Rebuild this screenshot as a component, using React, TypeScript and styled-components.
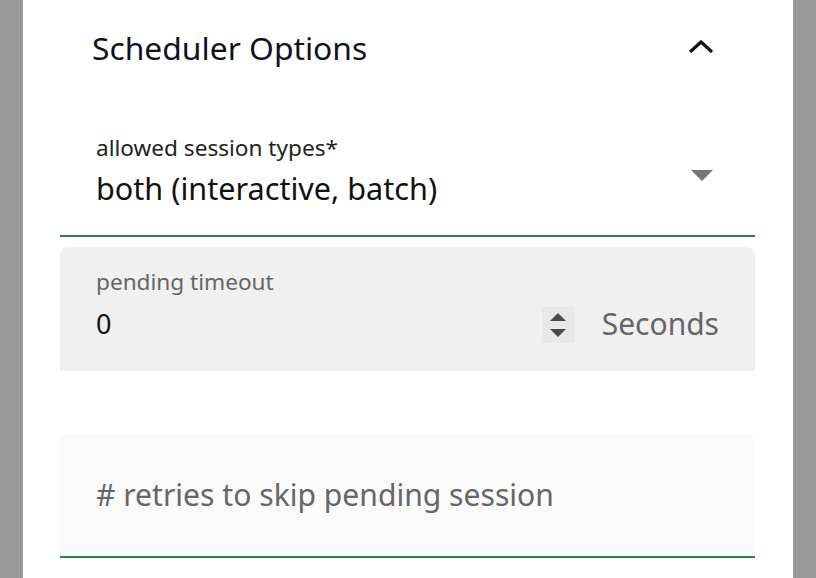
import React from "react";
import styled, { createGlobalStyle } from "styled-components";

const Global = createGlobalStyle`
  html, body { margin: 0; padding: 0; background: #fff; }
  body { font-family: "Noto Sans", "Open Sans", sans-serif; }
`;

const Page = styled.div`
  display: flex;
  height: 578px;
  overflow: hidden;
`;

const SideBar = styled.div`
  width: 23px;
  flex: none;
  background: #999999;
`;

const Panel = styled.div`
  flex: 1;
  background: #fff;
  padding: 0 38px 0 37px;
  display: flex;
  flex-direction: column;
`;

const Header = styled.div`
  height: 94px;
  flex: none;
  display: flex;
  align-items: center;
  justify-content: space-between;
  padding: 0 41px 0 32px;
`;

const Title = styled.div`
  font-size: 31.8px;
  color: #111122;
`;

const IconBox = styled.div`
  width: 26px;
  height: 28px;
  display: flex;
  align-items: center;
  justify-content: center;
`;

const SelectField = styled.div`
  position: relative;
  flex: none;
  height: 143px;
  box-sizing: border-box;
  padding: 40px 36px 0 36px;
  border-bottom: 2px solid #2e7d52;
  margin-bottom: 10px;
`;

const SmallLabel = styled.div<{ $muted?: boolean }>`
  font-size: 22.6px;
  line-height: 28px;
  color: ${(p) => (p.$muted ? "#666" : "#222")};
`;

const Value = styled.div<{ $size: number; $gap: number }>`
  font-size: ${(p) => p.$size}px;
  line-height: 36px;
  color: #111;
  margin-top: ${(p) => p.$gap}px;
`;

const Caret = styled.div`
  position: absolute;
  right: 42px;
  top: 76px;
  width: 0;
  height: 0;
  border-left: 11px solid transparent;
  border-right: 11px solid transparent;
  border-top: 11px solid #757575;
`;

const FilledField = styled.div<{ $bg: string; $underline?: boolean; $pad: number }>`
  flex: none;
  height: 124px;
  box-sizing: border-box;
  background: ${(p) => p.$bg};
  border-radius: 8px 8px 0 0;
  padding: ${(p) => p.$pad}px 36px 0 36px;
  display: flex;
  align-items: flex-start;
  border-bottom: ${(p) => (p.$underline ? "2px solid #2e7d52" : "none")};
`;

const FieldBody = styled.div`
  flex: 1;
  display: flex;
  flex-direction: column;
`;

const Spinner = styled.div`
  width: 33px;
  height: 36px;
  background: #e8e8e8;
  display: flex;
  flex-direction: column;
  align-items: center;
  justify-content: center;
  gap: 8px;
  margin-top: 39px;
  margin-right: 27px;
`;

const TriUp = styled.div`
  width: 0;
  height: 0;
  border-left: 8px solid transparent;
  border-right: 8px solid transparent;
  border-bottom: 8px solid #4a4a4a;
`;

const TriDown = styled.div`
  width: 0;
  height: 0;
  border-left: 8px solid transparent;
  border-right: 8px solid transparent;
  border-top: 8px solid #4a4a4a;
`;

const Unit = styled.div`
  font-size: 30px;
  line-height: 36px;
  color: #666;
  margin-top: 38px;
`;

const Spacer = styled.div`
  height: 63px;
  flex: none;
`;

const Placeholder = styled.div`
  font-size: 30.1px;
  line-height: 36px;
  color: #666;
`;

export default function App() {
  return (
    <>
      <Global />
      <Page>
        <SideBar />
        <Panel>
          <Header>
            <Title>Scheduler Options</Title>
            <IconBox>
              <svg width="26" height="16" viewBox="0 0 26 16">
                <path d="M2 13 L13 3 L24 13" fill="none" stroke="#111122" strokeWidth="3.2" />
              </svg>
            </IconBox>
          </Header>
          <SelectField>
            <SmallLabel>allowed session types*</SmallLabel>
            <Value $size={30.6} $gap={8}>both (interactive, batch)</Value>
            <Caret />
          </SelectField>
          <FilledField $bg="#f0f0f0" $pad={21}>
            <FieldBody>
              <SmallLabel $muted>pending timeout</SmallLabel>
              <Value $size={27} $gap={10}>0</Value>
            </FieldBody>
            <Spinner>
              <TriUp />
              <TriDown />
            </Spinner>
            <Unit>Seconds</Unit>
          </FilledField>
          <Spacer />
          <FilledField $bg="#fafafa" $underline $pad={43}>
            <Placeholder># retries to skip pending session</Placeholder>
          </FilledField>
        </Panel>
        <SideBar />
      </Page>
    </>
  );
}
